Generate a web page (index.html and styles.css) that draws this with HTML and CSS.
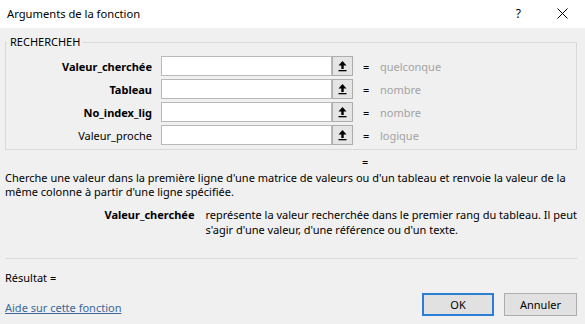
FILE: index.html
```html
<!DOCTYPE html>
<html lang="fr">
<head>
<meta charset="utf-8">
<title>Arguments de la fonction</title>
<link rel="stylesheet" href="styles.css">
</head>
<body>
<div class="dialog">
  <div class="titlebar">
    <span class="title">Arguments de la fonction</span>
    <span class="help">?</span>
    <svg class="close" width="11" height="11" viewBox="0 0 11 11"><path d="M0.5 0.5 L10.5 10.5 M10.5 0.5 L0.5 10.5" stroke="#000" stroke-width="1" fill="none"/></svg>
  </div>
  <div class="content">
    <fieldset class="group">
      <legend>RECHERCHEH</legend>
      <div class="row">
        <span class="label bold">Valeur_cherchée</span>
        <span class="input"></span>
        <span class="ref"><svg width="11" height="12" viewBox="0 0 11 12"><path d="M5.5 1 L1.5 5.5 H4.3 V9 H6.7 V5.5 H9.5 Z" fill="#000"/><rect x="1.5" y="10" width="8" height="1.3" fill="#000"/></svg></span>
        <span class="eq">=</span>
        <span class="val">quelconque</span>
      </div>
      <div class="row">
        <span class="label bold">Tableau</span>
        <span class="input"></span>
        <span class="ref"><svg width="11" height="12" viewBox="0 0 11 12"><path d="M5.5 1 L1.5 5.5 H4.3 V9 H6.7 V5.5 H9.5 Z" fill="#000"/><rect x="1.5" y="10" width="8" height="1.3" fill="#000"/></svg></span>
        <span class="eq">=</span>
        <span class="val">nombre</span>
      </div>
      <div class="row">
        <span class="label bold">No_index_lig</span>
        <span class="input"></span>
        <span class="ref"><svg width="11" height="12" viewBox="0 0 11 12"><path d="M5.5 1 L1.5 5.5 H4.3 V9 H6.7 V5.5 H9.5 Z" fill="#000"/><rect x="1.5" y="10" width="8" height="1.3" fill="#000"/></svg></span>
        <span class="eq">=</span>
        <span class="val">nombre</span>
      </div>
      <div class="row">
        <span class="label">Valeur_proche</span>
        <span class="input"></span>
        <span class="ref"><svg width="11" height="12" viewBox="0 0 11 12"><path d="M5.5 1 L1.5 5.5 H4.3 V9 H6.7 V5.5 H9.5 Z" fill="#000"/><rect x="1.5" y="10" width="8" height="1.3" fill="#000"/></svg></span>
        <span class="eq">=</span>
        <span class="val">logique</span>
      </div>
    </fieldset>
    <div class="result-eq">=</div>
    <p class="desc">Cherche une valeur dans la première ligne d'une matrice de valeurs ou d'un tableau et renvoie la valeur de la<br>même colonne à partir d'une ligne spécifiée.</p>
    <div class="argdesc">
      <span class="argname">Valeur_cherchée</span>
      <span class="argtext">représente la valeur recherchée dans le premier rang du tableau. Il peut<br>s'agir d'une valeur, d'une référence ou d'un texte.</span>
    </div>
    <div class="sep"></div>
    <div class="resultat">Résultat =</div>
    <div class="footer">
      <a class="helplink" href="#">Aide sur cette fonction</a>
      <button class="btn ok" type="button">OK</button>
      <button class="btn" type="button">Annuler</button>
    </div>
  </div>
</div>
</body>
</html>
```

FILE: styles.css
```css
* { box-sizing: border-box; }
html, body { margin: 0; padding: 0; }
body {
  width: 585px;
  height: 324px;
  overflow: hidden;
  background: #f0f0f0;
  font-family: "Noto Sans", "Liberation Sans", sans-serif;
  font-size: 11px;
  color: #000;
}
.dialog { width: 585px; height: 324px; }
.titlebar {
  height: 28px;
  background: #fff;
  display: flex;
  align-items: center;
  padding: 0 17px 2px 7px;
}
.title { font-size: 11.2px; flex: 1; }
.help { font-size: 12px; margin-right: 36px; }
.close { display: block; }
.content { padding: 0 8px 0 5px; }
.group {
  margin: 6px 0 0 0;
  padding: 6px 0 4px 0;
  border: 1px solid #d9d9d9;
  min-width: 0;
}
.group legend {
  padding: 0 3px;
  margin-left: 1px;
  line-height: 16px;
}
.row {
  display: flex;
  align-items: center;
  height: 20px;
  margin-bottom: 3px;
}
.row:last-child { margin-bottom: 0; }
.label { width: 146px; text-align: right; }
.bold { font-weight: bold; }
.input {
  width: 171px;
  height: 20px;
  margin-left: 9px;
  background: #fff;
  border: 1px solid #b9b9b9;
}
.ref {
  width: 21px;
  height: 20px;
  background: #e5e5e5;
  border: 1px solid #adadad;
  display: flex;
  align-items: center;
  justify-content: center;
}
.ref svg { display: block; }
.eq { margin-left: 10px; width: 17px; }
.val { color: #a3a3a3; }
.result-eq {
  line-height: 16px;
  margin: 4px 0 0 357px;
}
.desc {
  margin: 1px 0 0 0;
  line-height: 14px;
  white-space: nowrap;
}
.argdesc {
  display: flex;
  margin-top: 8px;
  line-height: 15px;
}
.argname { font-weight: bold; width: 207px; text-align: right; padding-right: 11px; }
.argtext { white-space: nowrap; }
.sep {
  height: 1px;
  background: #d9d9d9;
  margin-top: 21px;
}
.resultat { line-height: 16px; margin-top: 11px; }
.footer {
  display: flex;
  align-items: flex-end;
  margin-top: 7px;
  height: 23px;
}
.helplink {
  flex: 1;
  color: #3a6898;
  text-decoration: underline;
  line-height: 16px;
}
.btn {
  width: 73px;
  height: 23px;
  font-family: inherit;
  font-size: 11px;
  background: #e1e1e1;
  border: 1px solid #adadad;
  padding: 0;
  color: #000;
}
.btn.ok { border: 2px solid #2a7fd4; margin-right: 10px; width: 72px; }
```
